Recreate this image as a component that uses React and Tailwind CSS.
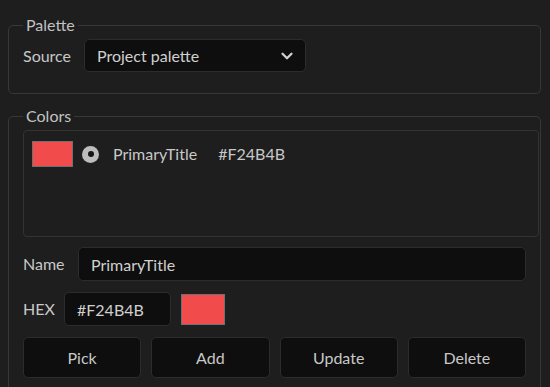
import React, { useState } from 'react';
import { ChevronDown } from 'lucide-react';

const font = { fontFamily: 'Lato, "Open Sans", sans-serif' };

export default function App() {
  const [name, setName] = useState('PrimaryTitle');
  const [hex, setHex] = useState('#F24B4B');

  return (
    <div className="w-[550px] h-[387px] overflow-hidden bg-[#1e1e1e] text-[16px] text-[#c8c8c8]" style={font}>
      <div className="pl-2 pt-[15px]">
        {/* Palette group */}
        <fieldset className="w-[533px] border border-[#383838] rounded-[5px] pl-[14px] pr-[14px] pb-[21px]">
          <legend className="px-[3px] leading-5 text-[#c2c2c2]">Palette</legend>
          <div className="flex items-center mt-1">
            <span className="w-[61px] shrink-0">Source</span>
            <button className="flex items-center justify-between w-[222px] h-[33px] rounded-[5px] border border-[#2c2c2c] bg-[#0e0e0e] pl-3 pr-[9px] text-[#d0d0d0]">
              <span>Project palette</span>
              <ChevronDown size={18} strokeWidth={3} className="text-[#d2d2d2]" />
            </button>
          </div>
        </fieldset>

        {/* Colors group */}
        <fieldset className="mt-3 w-[533px] h-[300px] border border-[#383838] rounded-[5px] pl-[14px] pr-[1px]">
          <legend className="px-[3px] leading-5 text-[#c2c2c2]">Colors</legend>
          <div className="mt-1 h-[107px] border border-[#333333] rounded-[4px] pl-2 pt-[10px]">
            <div className="flex items-center h-[26px]">
              <div className="w-[41px] h-[26px] bg-[#F24B4B] border border-[#707070]" />
              <div className="ml-[9px] w-[17px] h-[17px] rounded-full bg-[#bdbdbd] flex items-center justify-center">
                <div className="w-[6px] h-[6px] rounded-full bg-[#151515]" />
              </div>
              <span className="ml-[14px]">PrimaryTitle</span>
              <span className="ml-[21px]">#F24B4B</span>
            </div>
          </div>

          <div className="flex items-center mt-[10px] mr-[13px]">
            <span className="w-[55px] shrink-0">Name</span>
            <input
              value={name}
              onChange={e => setName(e.target.value)}
              className="flex-1 h-[34px] rounded-[5px] border border-[#2c2c2c] bg-[#0e0e0e] px-3 text-[#d0d0d0] outline-none"
            />
          </div>

          <div className="flex items-center mt-[11px]">
            <span className="w-[41px] shrink-0">HEX</span>
            <input
              value={hex}
              onChange={e => setHex(e.target.value)}
              className="w-[107px] h-[34px] rounded-[5px] border border-[#2c2c2c] bg-[#0e0e0e] px-3 text-[#d0d0d0] outline-none"
            />
            <div className="ml-[10px] w-[44px] h-[31px] bg-[#F24B4B] border border-[#707070]" />
          </div>

          <div className="grid grid-cols-4 gap-[10px] mt-[11px] mr-[13px]">
            {['Pick', 'Add', 'Update', 'Delete'].map(label => (
              <button
                key={label}
                className="h-[41px] rounded-[5px] border border-[#2c2c2c] bg-[#0e0e0e] text-[#c8c8c8]"
              >
                {label}
              </button>
            ))}
          </div>
        </fieldset>
      </div>
    </div>
  );
}
